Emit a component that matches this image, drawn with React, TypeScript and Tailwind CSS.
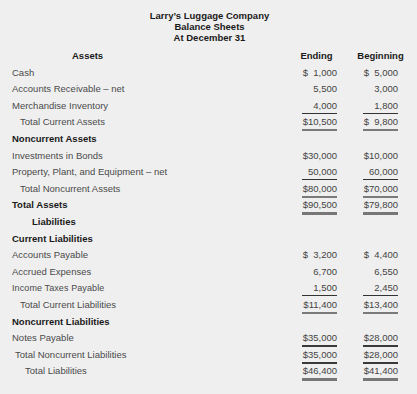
import React from "react";

type Line = "none" | "thin" | "mid" | "dark" | "thick";
type Row = {
  label: string;
  kind?: "normal" | "bold" | "header";
  indent?: string;
  end?: string;
  beg?: string;
  line?: Line;
  small?: boolean;
};

const F = "\u2007";

const rows: Row[] = [
  { label: "Cash", end: `$${F}1,000`, beg: `$${F}5,000` },
  { label: "Accounts Receivable – net", end: "5,500", beg: "3,000" },
  { label: "Merchandise Inventory", end: "4,000", beg: "1,800", line: "thin" },
  { label: "Total Current Assets", indent: "pl-[8px]", end: "$10,500", beg: `$${F}9,800`, line: "mid" },
  { label: "Noncurrent Assets", kind: "bold" },
  { label: "Investments in Bonds", end: "$30,000", beg: "$10,000" },
  { label: "Property, Plant, and Equipment – net", end: "50,000", beg: "60,000", line: "thin" },
  { label: "Total Noncurrent Assets", indent: "pl-[8px]", end: "$80,000", beg: "$70,000", line: "mid" },
  { label: "Total Assets", kind: "bold", end: "$90,500", beg: "$79,800", line: "thick" },
  { label: "Liabilities", kind: "header", indent: "pl-[20px]" },
  { label: "Current Liabilities", kind: "bold" },
  { label: "Accounts Payable", end: `$${F}3,200`, beg: `$${F}4,400` },
  { label: "Accrued Expenses", end: "6,700", beg: "6,550" },
  { label: "Income Taxes Payable", small: true, end: "1,500", beg: "2,450", line: "thin" },
  { label: "Total Current Liabilities", indent: "pl-[8px]", end: "$11,400", beg: "$13,400", line: "mid" },
  { label: "Noncurrent Liabilities", kind: "bold" },
  { label: "Notes Payable", end: "$35,000", beg: "$28,000", line: "dark" },
  { label: "Total Noncurrent Liabilities", indent: "pl-[3px]", end: "$35,000", beg: "$28,000", line: "dark" },
  { label: "Total Liabilities", indent: "pl-[13px]", end: "$46,400", beg: "$41,400", line: "thick" },
];

function lineClass(l: Line | undefined) {
  switch (l) {
    case "thin":
      return "border-b border-[#333]";
    case "mid":
      return "border-b-2 border-[#7a7a7a]";
    case "dark":
      return "border-b-2 border-[#3a3a3a]";
    case "thick":
      return "border-b-[3px] border-[#777]";
    default:
      return "border-b border-transparent";
  }
}

function Amount({ v, line }: { v?: string; line?: Line }) {
  if (!v) return <div />;
  return (
    <div className="pt-[2px]">
      <span
        className={`block w-[35px] whitespace-pre text-right leading-[12px] pb-[1px] text-[#444] ${lineClass(line)}`}
      >
        {v}
      </span>
    </div>
  );
}

export default function App() {
  return (
    <div
      className="w-[417px] h-[394px] bg-[#efefef] pt-[10px]"
      style={{ fontFamily: '"Liberation Sans", Arial, sans-serif' }}
    >
      <div className="text-center font-bold text-[#1a1a1a] text-[9.5px] leading-[11px] pl-[2px]">
        <div>Larry’s Luggage Company</div>
        <div>Balance Sheets</div>
        <div>At December 31</div>
      </div>
      <div className="mt-[5px] pl-[12px] pr-[19px] text-[9.5px]">
        <div className="grid grid-cols-[1fr_35px_26px_35px] h-[16.6px] items-start">
          <div className="pt-[2px] leading-[12px] font-bold text-[#1a1a1a] pl-[60px]">Assets</div>
          <div className="pt-[2px] leading-[12px] font-bold text-[#1a1a1a] flex justify-center whitespace-nowrap -translate-x-[3px]">
            Ending
          </div>
          <div />
          <div className="pt-[2px] leading-[12px] font-bold text-[#1a1a1a] flex justify-center whitespace-nowrap">
            Beginning
          </div>
        </div>
        {rows.map((r, i) => (
          <div
            key={i}
            className="grid grid-cols-[1fr_35px_26px_35px] h-[16.6px] items-start"
          >
            <div
              className={`pt-[2px] leading-[12px] whitespace-nowrap ${r.indent ?? ""} ${
                r.kind === "bold" || r.kind === "header"
                  ? "font-bold text-[#1a1a1a]"
                  : "text-[#4a4a4a]"
              } ${r.small ? "text-[9px] tracking-[0.1px]" : ""}`}
            >
              {r.label}
            </div>
            <Amount v={r.end} line={r.line} />
            <div />
            <Amount v={r.beg} line={r.line} />
          </div>
        ))}
      </div>
    </div>
  );
}
